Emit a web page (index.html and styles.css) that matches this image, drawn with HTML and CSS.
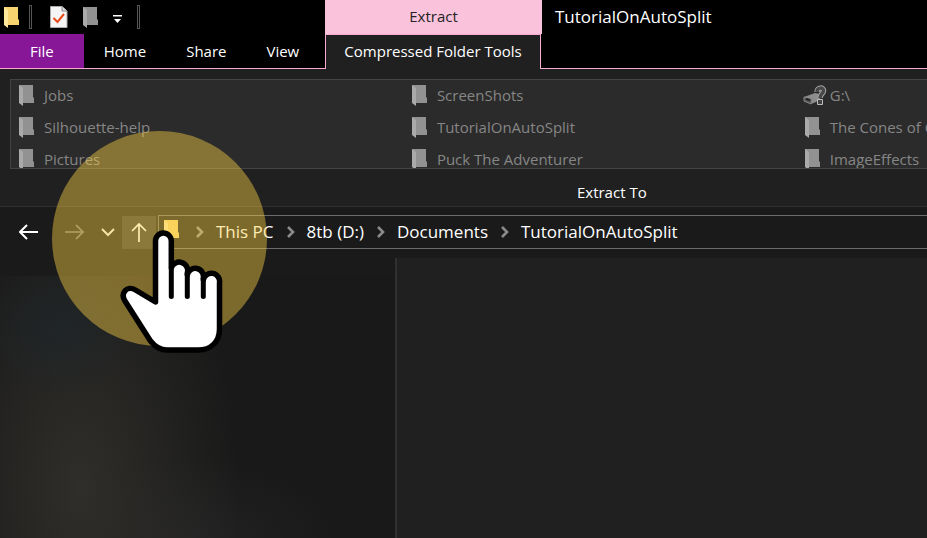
FILE: index.html
```html
<!DOCTYPE html>
<html lang="en">
<head>
<meta charset="utf-8">
<title>TutorialOnAutoSplit</title>
<link rel="stylesheet" href="styles.css">
</head>
<body>
<svg class="defs" aria-hidden="true">
  <symbol id="folder" viewBox="0 0 15 22"><path d="M0 1H14V13L15 14V19H4L0 17Z" fill="var(--back)"/><path d="M0 1L4 4V22L0 19Z" fill="var(--flap)"/></symbol>
  <symbol id="chevron" viewBox="0 0 8 12"><path d="M1 1L6 6L1 11" fill="none" stroke="currentColor" stroke-width="2.6"/></symbol>
</svg>
<header class="titlebar">
  <div class="main-tabs">
    <div class="quick">
      <svg class="folder gold"><use href="#folder"/></svg>
      <span class="divider"></span>
      <button class="properties" aria-label="Properties"><svg width="18" height="22" viewBox="0 0 18 22"><path d="M.5.5H12L17 5V21.500H.5Z" fill="#f5f5f5" stroke="#aaa"/><path d="M12 .5V5H17" fill="#ddd" stroke="#888"/><path d="M3.500 12L7.500 16L14 8" fill="none" stroke="#e94b1b" stroke-width="2"/></svg></button>
      <button class="new-folder" aria-label="New folder"><svg class="folder dim"><use href="#folder"/></svg></button>
      <button class="customize" aria-label="Customize Quick Access Toolbar"><svg width="10" height="9" viewBox="0 0 10 9"><path d="M0 0H9V1.500H0ZM1 4H8L4.500 8Z" fill="#fff"/></svg></button>
      <span class="divider"></span>
    </div>
    <nav class="tabs"><button class="tab file">File</button><button class="tab">Home</button><button class="tab">Share</button><button class="tab">View</button></nav>
  </div>
  <div class="context">
    <div class="context-name">Extract</div>
    <button class="tab context-tab">Compressed Folder Tools</button>
  </div>
  <h1 class="window-title">TutorialOnAutoSplit</h1>
</header>
<section class="ribbon">
  <div class="group">
    <div class="destinations">
      <button class="place"><svg class="folder dim"><use href="#folder"/></svg>Jobs</button>
      <button class="place"><svg class="folder dim"><use href="#folder"/></svg>ScreenShots</button>
      <button class="place drive"><svg width="24" height="22" viewBox="0 0 24 22"><path d="M1 13L12 9L21 11L13 18L8 20L1 17Z" fill="#8d8d8d"/><path d="M1 13L9 15L8 20L1 17Z" fill="#555" stroke="#888"/><path d="M3 15L7 16" stroke="#222" stroke-width="2"/><path d="M14 8C14 3 21 3 20.500 7C20.500 9.500 17 10 17 14" fill="none" stroke="#a5a5a5" stroke-width="5.500"/><path d="M14 8C14 3 21 3 20.500 7C20.500 9.500 17 10 17 14" fill="none" stroke="#484848" stroke-width="3.500"/><path d="M14.500 15.500H19.500V20.500H14.500Z" fill="#444" stroke="#bbb"/></svg>G:\</button>
      <button class="place"><svg class="folder dim"><use href="#folder"/></svg>Silhouette-help</button>
      <button class="place"><svg class="folder dim"><use href="#folder"/></svg>TutorialOnAutoSplit</button>
      <button class="place"><svg class="folder dim"><use href="#folder"/></svg>The Cones of C</button>
      <button class="place"><svg class="folder dim"><use href="#folder"/></svg>Pictures</button>
      <button class="place"><svg class="folder dim"><use href="#folder"/></svg>Puck The Adventurer</button>
      <button class="place"><svg class="folder dim"><use href="#folder"/></svg>ImageEffects</button>
    </div>
    <div class="group-name">Extract To</div>
  </div>
</section>
<div class="navigation">
  <button class="nav-button back" aria-label="Back"><svg width="20" height="16" viewBox="0 0 20 16"><path d="M19 8H1M8 1L1 8L8 15" fill="none" stroke="#fff" stroke-width="2"/></svg></button>
  <button class="nav-button forward" aria-label="Forward"><svg width="20" height="16" viewBox="0 0 20 16"><path d="M0 8H18M11 1L18 8L11 15" fill="none" stroke="#7c7c7c" stroke-width="1.700"/></svg></button>
  <button class="nav-button recent" aria-label="Recent locations"><svg width="14" height="10" viewBox="0 0 14 10"><path d="M1 2L7 8L13 2" fill="none" stroke="#eee" stroke-width="2"/></svg></button>
  <button class="nav-button up" aria-label="Up"><svg width="16" height="20" viewBox="0 0 16 20"><path d="M8 20V2M1 9L8 2L15 9" fill="none" stroke="#fff" stroke-width="1.700"/></svg></button>
  <div class="address">
    <svg class="folder gold"><use href="#folder"/></svg>
    <svg class="chevron"><use href="#chevron"/></svg><a href="#">This PC</a>
    <svg class="chevron"><use href="#chevron"/></svg><a href="#">8tb (D:)</a>
    <svg class="chevron"><use href="#chevron"/></svg><a href="#">Documents</a>
    <svg class="chevron"><use href="#chevron"/></svg><a href="#">TutorialOnAutoSplit</a>
  </div>
</div>
<main class="content">
  <aside class="sidebar"></aside>
  <section class="files"></section>
</main>
<div class="highlight"></div>
<svg class="hand" viewBox="118 227 108 130" aria-hidden="true">
  <path d="M155.500 302L135.500 290C127 285 120 293 125 301L150.500 341C156 348 161 350 167 350H198C211 350 219.500 342 219.500 329V283A8 8 0 0 0 203.300 280V278A8 8 0 0 0 187.300 275V273A8 8 0 0 0 171.300 268V241A7.900 7.900 0 0 0 155.500 241Z" fill="#fff" stroke="#000" stroke-width="5.500" stroke-linejoin="round"/>
  <path d="M171.300 268V296.500M187.300 274V296.500M203.300 279V296.500" fill="none" stroke="#000" stroke-width="5" stroke-linecap="round"/>
</svg>
</body>
</html>
```
FILE: styles.css
```css
* { box-sizing: border-box; }
body {
  margin: 0;
  min-height: 100vh;
  display: flex;
  flex-direction: column;
  position: relative;
  overflow: hidden;
  background: #1a1a1a;
  color: #fff;
  font: 15px/20px "Open Sans", sans-serif;
}
button {
  border: 0;
  padding: 0;
  background: none;
  color: inherit;
  font: inherit;
}
svg { display: block; flex: none; }
.defs { position: absolute; width: 0; height: 0; }
.folder { width: 15px; height: 22px; }
.gold { --back: #f6d36e; --flap: #ffe79b; }
.dim { --back: #929292; --flap: #aaa; }

.titlebar { display: flex; background: #000; }
.main-tabs { width: 325px; border-bottom: 1px solid #f9a9d2; }
.quick { display: flex; align-items: center; height: 34px; padding-left: 4px; }
.divider { width: 3px; height: 24px; border: 1px solid #555; margin-left: 10px; }
.properties { margin-left: 18px; }
.new-folder { margin-left: 15px; }
.customize { margin: 4px 4px 0 15px; }
.tabs { display: flex; }
.tab { height: 34px; padding: 0 20px; white-space: nowrap; }
.file { background: #881798; padding: 0 30px; }
.context { width: 217px; }
.context-name { height: 34px; line-height: 33px; background: #fbc2dc; color: #222; text-align: center; }
.context-tab {
  width: 216px;
  height: 35px;
  padding: 0 0 2px;
  background: #202020;
  border: 1px solid #f9a9d2;
  border-bottom: 0;
}
.window-title {
  flex: 1;
  margin: 0 0 0 -1px;
  padding: 7px 14px;
  border-bottom: 1px solid #f9a9d2;
  font-size: 17px;
  font-weight: 400;
}

.ribbon { background: #202020; border-bottom: 1px solid #303030; overflow: hidden; }
.group { width: 132vw; padding: 10px 10px 4px; }
.destinations {
  display: grid;
  grid-template-columns: repeat(3, 1fr);
  grid-auto-rows: 32px;
  height: 90px;
  padding: 0 15px 0 8px;
  overflow: hidden;
  background: #2b2b2b;
  border: 1px solid #434343;
}
.place { display: flex; align-items: center; gap: 10px; padding-bottom: 2px; color: #868686; text-align: left; white-space: nowrap; }
.drive { gap: 3px; margin-left: -2px; }
.group-name { padding: 13px 0 0; text-align: center; }

.navigation { display: flex; align-items: center; padding: 8px 0 9px 17px; }
.nav-button { display: flex; align-items: center; justify-content: center; height: 33px; }
.back { width: 24px; }
.forward { width: 24px; margin-left: 22px; }
.recent { width: 20px; margin-left: 11px; }
.up { width: 34px; margin-left: 4px; background: #333; }
.address {
  flex: 1;
  display: flex;
  align-items: center;
  height: 34px;
  margin-left: 2px;
  padding-left: 5px;
  border: 1px solid #6b6b6b;
  border-right: 0;
  font-size: 17px;
  white-space: nowrap;
}
.address a { color: #fff; text-decoration: none; }
.address .folder { margin-bottom: 4px; }
.chevron { width: 8px; height: 12px; margin: 0 12px 0 13px; color: #8b8b8b; }
.address .folder + .chevron { margin-left: 17px; }

.content { flex: 1; display: grid; grid-template-columns: 395px 1fr; }
.sidebar {
  margin-top: 18px;
  background:
    radial-gradient(ellipse 80px 70px at 60px 50px, rgba(30, 38, 44, .6), transparent),
    radial-gradient(ellipse 160px 300px at 80px 210px, #2f2e2a, transparent),
    radial-gradient(ellipse 150px 80px at 190px 262px, rgba(43, 43, 45, .5), transparent),
    #191919;
}
.files { background: #202020; border-left: 2px solid #303030; }

.highlight {
  position: absolute;
  left: 52px;
  top: 131px;
  width: 215px;
  height: 215px;
  border-radius: 50%;
  background: rgba(255, 210, 70, .43);
}
.hand { position: absolute; left: 118px; top: 227px; width: 108px; height: 130px; }
```
